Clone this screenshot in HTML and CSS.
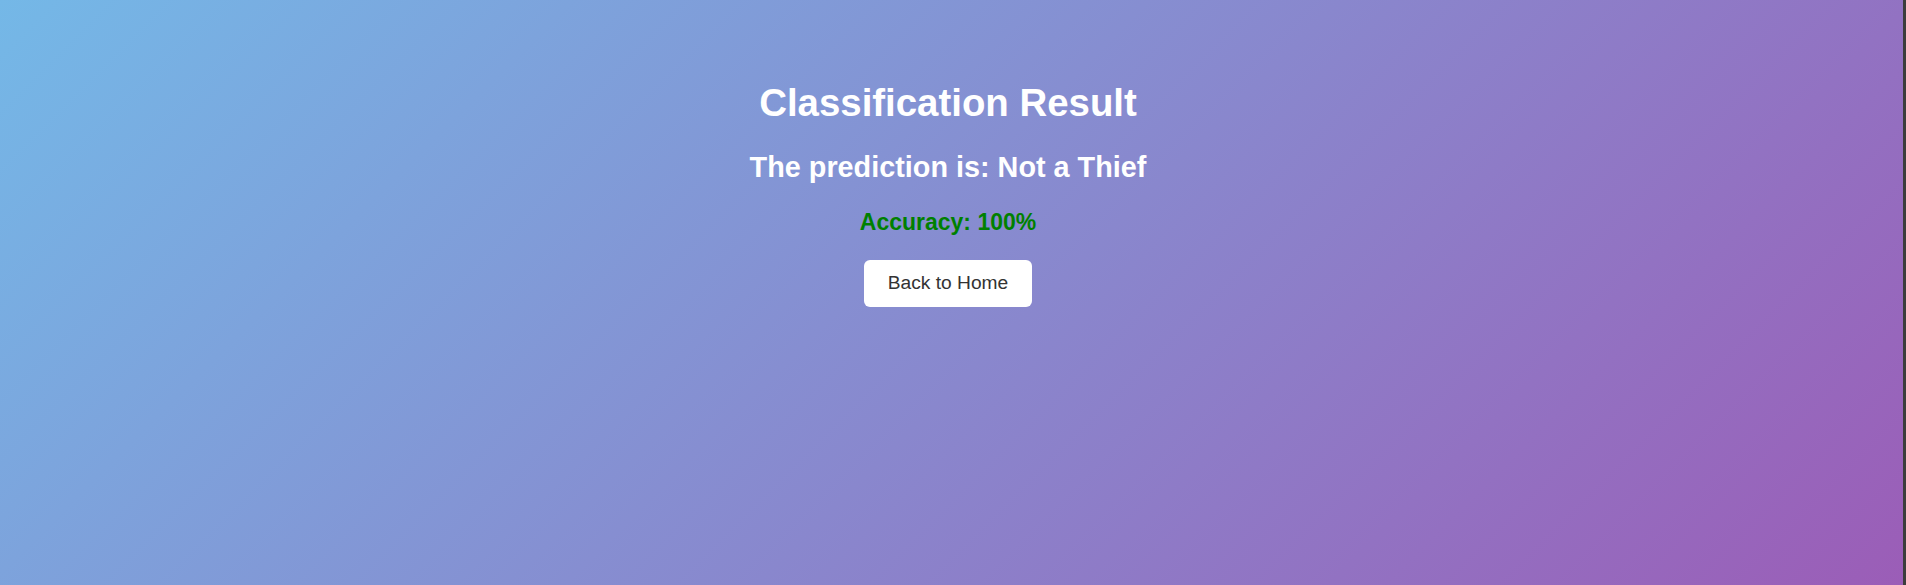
FILE: index.html
```html
<!DOCTYPE html>
<html lang="en">
<head>
<meta charset="utf-8">
<title>Classification Result</title>
<link rel="stylesheet" href="styles.css">
</head>
<body>
<div class="page">
  <main class="result">
    <h1 class="title">Classification Result</h1>
    <h2 class="prediction">The prediction is: Not a Thief</h2>
    <p class="accuracy">Accuracy: 100%</p>
    <a class="home-btn" href="#">Back to Home</a>
  </main>
</div>
<div class="edge"></div>
</body>
</html>
```
FILE: styles.css
```css
html, body {
  margin: 0;
  padding: 0;
  height: 100%;
}
body {
  display: flex;
  font-family: "Liberation Sans", Arial, sans-serif;
  background: #3c3c3c;
  overflow: hidden;
}
.page {
  flex: 1;
  height: 100%;
  background: linear-gradient(135deg, #74b8e7 0%, #9b5db7 100%);
}
.edge {
  width: 3px;
  height: 100%;
  background: #3c3c3c;
}
.result {
  display: flex;
  flex-direction: column;
  align-items: center;
  padding-top: 81px;
  padding-right: 7px;
  color: #ffffff;
  text-align: center;
}
.title {
  margin: 0;
  font-size: 38.4px;
  font-weight: bold;
  line-height: 44px;
}
.prediction {
  margin: 25.5px 0 0;
  font-size: 28.8px;
  font-weight: bold;
  line-height: 33px;
}
.accuracy {
  margin: 25px 0 0;
  font-size: 23px;
  font-weight: bold;
  line-height: 26px;
  color: #008000;
}
.home-btn {
  margin-top: 25.5px;
  display: inline-block;
  padding: 12.4px 24px;
  font-size: 19.2px;
  line-height: 22px;
  color: #333333;
  background: #ffffff;
  border-radius: 6px;
  text-decoration: none;
}
```
